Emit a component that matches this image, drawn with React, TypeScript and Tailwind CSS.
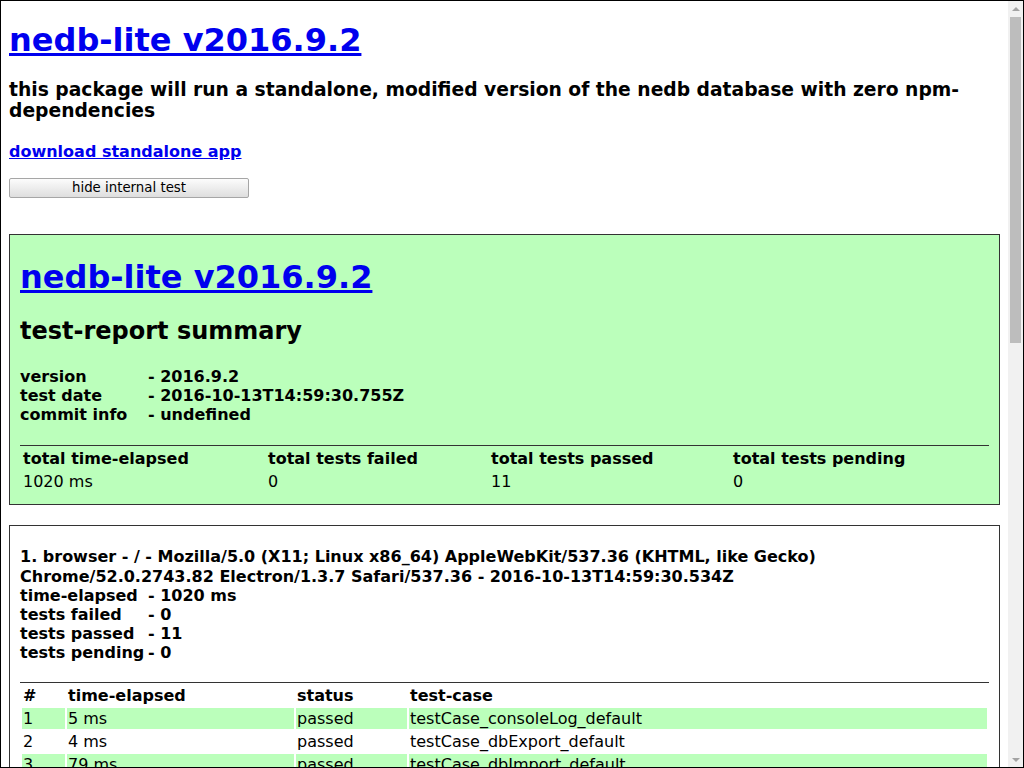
import React from 'react';

const tests = [
  { time: '5 ms', name: 'testCase_consoleLog_default' },
  { time: '4 ms', name: 'testCase_dbExport_default' },
  { time: '79 ms', name: 'testCase_dbImport_default' },
  { time: '12 ms', name: 'testCase_dbReset_default' },
  { time: '35 ms', name: 'testCase_dbTableCreate_default' },
  { time: '8 ms', name: 'testCase_dbTableDrop_default' },
  { time: '21 ms', name: 'testCase_dbTableFind_default' },
  { time: '17 ms', name: 'testCase_dbTableInsert_default' },
  { time: '14 ms', name: 'testCase_dbTableRemove_default' },
  { time: '19 ms', name: 'testCase_dbTableUpdate_default' },
  { time: '6 ms', name: 'testCase_testRun_default' },
];

function Scrollbar() {
  return (
    <div className="w-[15px] shrink-0 bg-[#f1f1f1] flex flex-col items-center">
      <div className="h-[15px] flex items-center justify-center">
        <div className="w-0 h-0 border-x-[4px] border-x-transparent border-b-[4px] border-b-[#a3a3a3]" />
      </div>
      <div className="w-[11px] h-[326px] bg-[#bdbdbd] mt-px" />
      <div className="flex-1" />
      <div className="h-[15px] flex items-center justify-center">
        <div className="w-0 h-0 border-x-[4px] border-x-transparent border-t-[4px] border-t-[#a3a3a3]" />
      </div>
    </div>
  );
}

export default function App() {
  return (
    <div className="h-screen border border-black flex bg-white text-black text-[16px] font-['DejaVu_Sans',sans-serif]">
      <div className="flex-1 min-w-0 overflow-hidden px-2 pb-2">
        <h1 className="text-[32px] font-bold leading-[1.164] mt-[21.44px] mb-[19.5px]">
          <a href="#" className="text-[#0000ee] underline">nedb-lite v2016.9.2</a>
        </h1>
        <h3 className="text-[18.72px] font-bold leading-[21px]">
          this package will run a standalone, modified version of the nedb database with zero npm-dependencies
        </h3>
        <h4 className="text-[16px] font-bold leading-[1.164] mt-[22.28px] mb-[16px]">
          <a href="#" className="text-[#0000ee] underline">download standalone app</a>
        </h4>
        <button className="block w-[240px] h-[20px] text-[13.33px] leading-none border border-[#a6a6a6] rounded-[2px] bg-gradient-to-b from-[#fcfcfc] to-[#dedede] text-black">
          hide internal test
        </button>

        {/* summary */}
        <div className="mt-[36px] border border-[#333] bg-[#bbffbb] px-[10px] pt-[10px] pb-[9px]">
          <h1 className="text-[32px] font-bold leading-[1.164] mt-[14.44px] mb-[21.5px]">
            <a href="#" className="text-[#0000ee] underline">nedb-lite v2016.9.2</a>
          </h1>
          <h2 className="text-[24px] font-bold leading-[1.164] mb-[21px]">test-report summary</h2>
          <div className="font-bold leading-[19px]">
            <div className="flex"><span className="w-[128px]">version</span><span>- 2016.9.2</span></div>
            <div className="flex"><span className="w-[128px]">test date</span><span>- 2016-10-13T14:59:30.755Z</span></div>
            <div className="flex"><span className="w-[128px]">commit info</span><span>- undefined</span></div>
          </div>
          <table className="w-full border-t border-[#333] border-separate border-spacing-[2px] mt-[21px] leading-[1.164]">
            <thead>
              <tr className="text-left">
                <th className="pt-[2px] pb-px px-px w-[243px]">total time-elapsed</th>
                <th className="pt-[2px] pb-px px-px w-[221px]">total tests failed</th>
                <th className="pt-[2px] pb-px px-px w-[240px]">total tests passed</th>
                <th className="pt-[2px] pb-px px-px">total tests pending</th>
              </tr>
            </thead>
            <tbody>
              <tr>
                <td className="pt-px pb-[2px] px-px">1020 ms</td>
                <td className="pt-px pb-[2px] px-px">0</td>
                <td className="pt-px pb-[2px] px-px">11</td>
                <td className="pt-px pb-[2px] px-px">0</td>
              </tr>
            </tbody>
          </table>
        </div>

        {/* browser report */}
        <div className="mt-[20px] border border-[#333] bg-white px-[10px] py-[10px]">
          <div className="font-bold leading-[19.2px] mt-[11px]">
            <div>
              1. browser - / - Mozilla/5.0 (X11; Linux x86_64) AppleWebKit/537.36 (KHTML, like Gecko) Chrome/52.0.2743.82 Electron/1.3.7 Safari/537.36 - 2016-10-13T14:59:30.534Z
            </div>
            <div className="flex"><span className="w-[128px]">time-elapsed</span><span>- 1020 ms</span></div>
            <div className="flex"><span className="w-[128px]">tests failed</span><span>- 0</span></div>
            <div className="flex"><span className="w-[128px]">tests passed</span><span>- 11</span></div>
            <div className="flex"><span className="w-[128px]">tests pending</span><span>- 0</span></div>
          </div>
          <table className="w-full border-t border-[#333] border-separate border-spacing-[2px] mt-[19px] leading-[1.164]">
            <thead>
              <tr className="text-left">
                <th className="pt-[2px] pb-px px-px w-[43px]">#</th>
                <th className="pt-[2px] pb-px px-px w-[227px]">time-elapsed</th>
                <th className="pt-[2px] pb-px px-px w-[111px]">status</th>
                <th className="pt-[2px] pb-px px-px">test-case</th>
              </tr>
            </thead>
            <tbody className="leading-[19px]">
              {tests.map((t, i) => (
                <tr key={t.name} className={i % 2 === 0 ? 'bg-[#bbffbb]' : ''}>
                  <td className="p-px">{i + 1}</td>
                  <td className="p-px">{t.time}</td>
                  <td className="p-px">passed</td>
                  <td className="p-px">{t.name}</td>
                </tr>
              ))}
            </tbody>
          </table>
        </div>
      </div>
      <Scrollbar />
    </div>
  );
}
